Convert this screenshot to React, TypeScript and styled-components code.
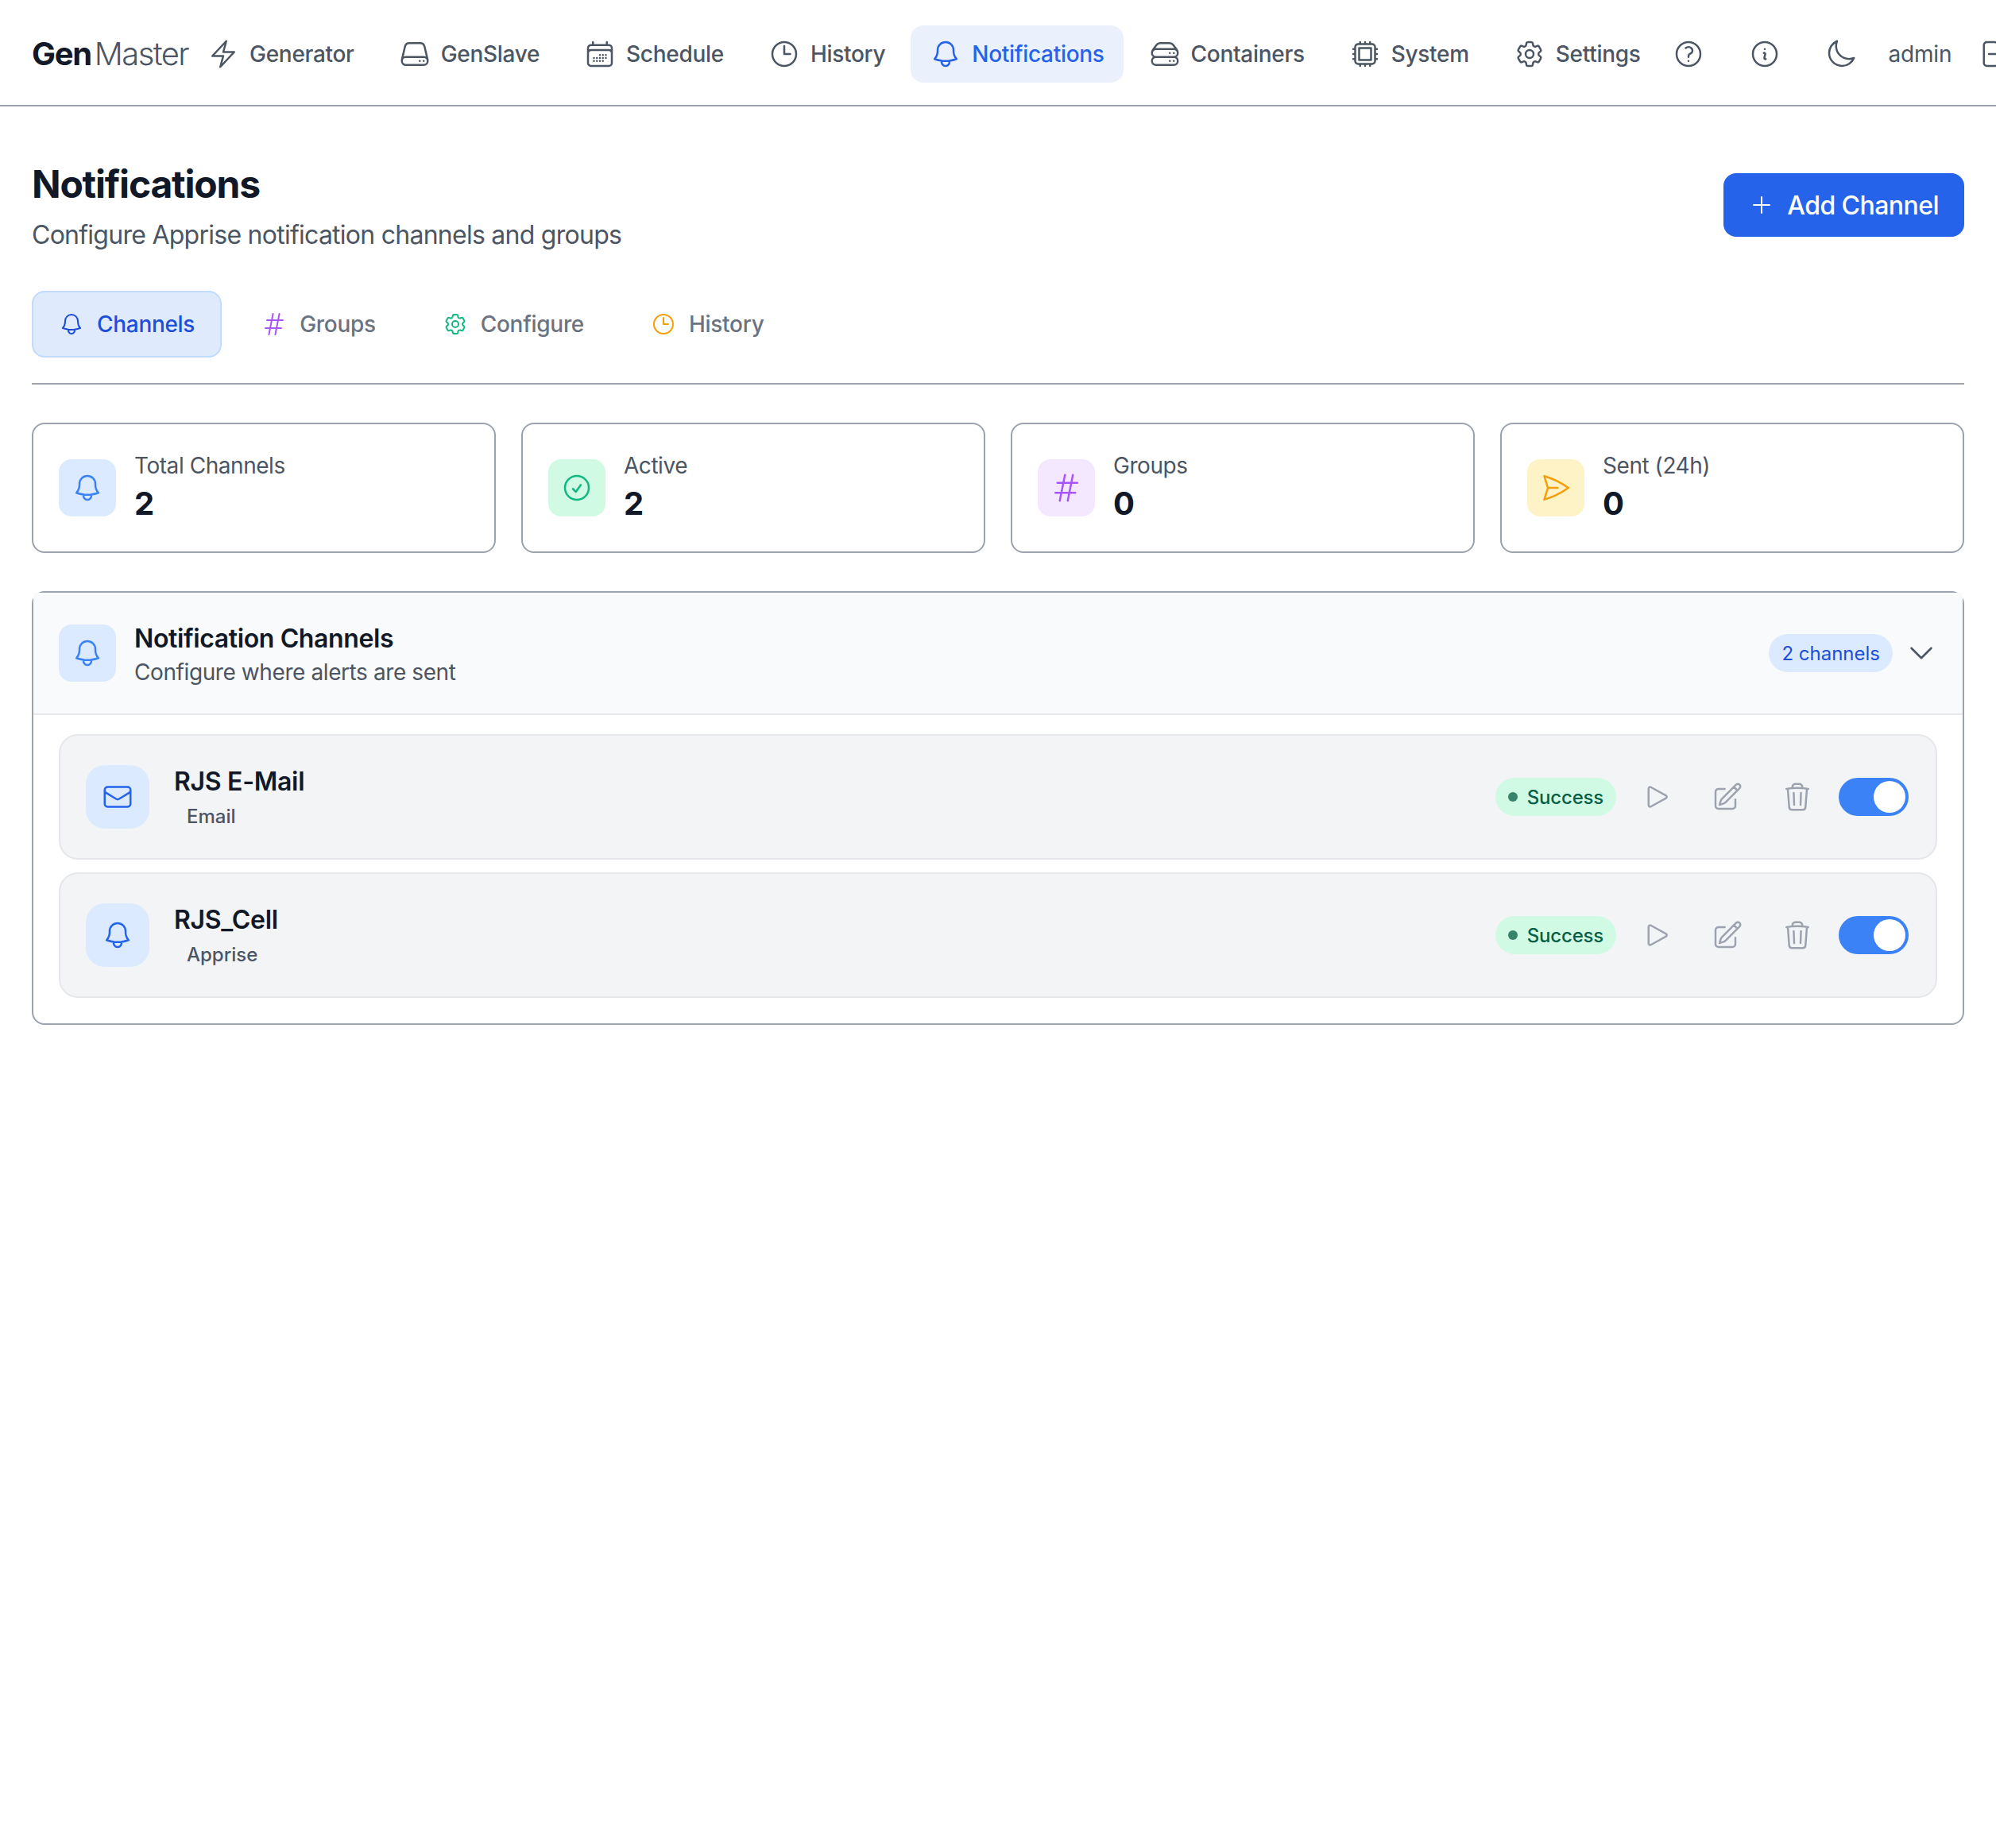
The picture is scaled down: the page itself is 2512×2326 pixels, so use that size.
import styled, { createGlobalStyle } from "styled-components";
import {
  HiOutlineArrowRightOnRectangle,
  HiOutlineBell,
  HiOutlineBolt,
  HiOutlineCalendarDays,
  HiOutlineCheckCircle,
  HiOutlineChevronDown,
  HiOutlineClock,
  HiOutlineCog6Tooth,
  HiOutlineCpuChip,
  HiOutlineEnvelope,
  HiOutlineHashtag,
  HiOutlineInformationCircle,
  HiOutlineMoon,
  HiOutlinePaperAirplane,
  HiOutlinePencilSquare,
  HiOutlinePlay,
  HiOutlinePlus,
  HiOutlineQuestionMarkCircle,
  HiOutlineServer,
  HiOutlineServerStack,
  HiOutlineTrash,
} from "react-icons/hi2";

const NavItems = [
  { title: "Generator", icon: HiOutlineBolt },
  { title: "GenSlave", icon: HiOutlineServer },
  { title: "Schedule", icon: HiOutlineCalendarDays },
  { title: "History", icon: HiOutlineClock },
  { title: "Notifications", icon: HiOutlineBell, active: true },
  { title: "Containers", icon: HiOutlineServerStack },
  { title: "System", icon: HiOutlineCpuChip },
  { title: "Settings", icon: HiOutlineCog6Tooth },
];

const TabItems = [
  { title: "Channels", icon: HiOutlineBell, color: "#1d4ed8", active: true },
  { title: "Groups", icon: HiOutlineHashtag, color: "#a855f7" },
  { title: "Configure", icon: HiOutlineCog6Tooth, color: "#10b981" },
  { title: "History", icon: HiOutlineClock, color: "#f59e0b" },
];

const Stats = [
  { label: "Total Channels", value: "2", icon: HiOutlineBell, color: "#3b82f6", bg: "#dbeafe" },
  { label: "Active", value: "2", icon: HiOutlineCheckCircle, color: "#10b981", bg: "#d1fae5" },
  { label: "Groups", value: "0", icon: HiOutlineHashtag, color: "#a855f7", bg: "#f3e8ff" },
  { label: "Sent (24h)", value: "0", icon: HiOutlinePaperAirplane, color: "#f59e0b", bg: "#fef3c7" },
];

const Channels = [
  { name: "RJS E-Mail", type: "Email", icon: HiOutlineEnvelope },
  { name: "RJS_Cell", type: "Apprise", icon: HiOutlineBell },
];

export default function App() {
  return (
    <>
      <GlobalStyle />
      <Nav>
        <Logo>
          <strong>Gen</strong>
          <span>Master</span>
        </Logo>
        <NavLinks>
          {NavItems.map((item) => (
            <NavItem key={item.title} $active={item.active}>
              <item.icon />
              {item.title}
            </NavItem>
          ))}
        </NavLinks>
        <NavTools>
          <NavIconButton>
            <HiOutlineQuestionMarkCircle />
          </NavIconButton>
          <NavIconButton>
            <HiOutlineInformationCircle />
          </NavIconButton>
          <NavIconButton>
            <HiOutlineMoon />
          </NavIconButton>
          <UserName>admin</UserName>
          <NavIconButton>
            <HiOutlineArrowRightOnRectangle />
          </NavIconButton>
        </NavTools>
      </Nav>

      <Main>
        <PageHeader>
          <PageHeading>
            <PageTitle>Notifications</PageTitle>
            <PageSubtitle>Configure Apprise notification channels and groups</PageSubtitle>
          </PageHeading>
          <AddButton>
            <HiOutlinePlus />
            Add Channel
          </AddButton>
        </PageHeader>

        <Tabs>
          {TabItems.map((tab) => (
            <Tab key={tab.title} $active={tab.active} $iconColor={tab.color}>
              <tab.icon />
              {tab.title}
            </Tab>
          ))}
        </Tabs>

        <StatGrid>
          {Stats.map((stat) => (
            <StatCard key={stat.label}>
              <IconBox $bg={stat.bg} $color={stat.color}>
                <stat.icon />
              </IconBox>
              <div>
                <StatLabel>{stat.label}</StatLabel>
                <StatValue>{stat.value}</StatValue>
              </div>
            </StatCard>
          ))}
        </StatGrid>

        <Section>
          <SectionHeader>
            <IconBox $bg="#dbeafe" $color="#3b82f6">
              <HiOutlineBell />
            </IconBox>
            <SectionText>
              <SectionTitle>Notification Channels</SectionTitle>
              <SectionSubtitle>Configure where alerts are sent</SectionSubtitle>
            </SectionText>
            <CountBadge>2 channels</CountBadge>
            <Chevron>
              <HiOutlineChevronDown />
            </Chevron>
          </SectionHeader>
          <SectionBody>
            {Channels.map((channel) => (
              <ChannelRow key={channel.name}>
                <ChannelIcon>
                  <channel.icon />
                </ChannelIcon>
                <ChannelInfo>
                  <ChannelName>{channel.name}</ChannelName>
                  <ChannelType>{channel.type}</ChannelType>
                </ChannelInfo>
                <StatusBadge>
                  <StatusDot />
                  Success
                </StatusBadge>
                <RowButton>
                  <HiOutlinePlay />
                </RowButton>
                <RowButton>
                  <HiOutlinePencilSquare />
                </RowButton>
                <RowButton>
                  <HiOutlineTrash />
                </RowButton>
                <Toggle>
                  <ToggleKnob />
                </Toggle>
              </ChannelRow>
            ))}
          </SectionBody>
        </Section>
      </Main>
    </>
  );
}

const GlobalStyle = createGlobalStyle`
  html, body {
    margin: 0;
    background: #fff;
    overflow-x: hidden;
  }
  body {
    min-height: 2326px;
    font-family: Inter, "Liberation Sans", sans-serif;
    color: #111827;
  }
  * {
    box-sizing: border-box;
  }
`;

const Nav = styled.nav`
  height: 134px;
  padding: 32px 0 28px 40px;
  display: flex;
  align-items: center;
  border-bottom: 2px solid #9ca3af;
  overflow: hidden;
`;

const Logo = styled.div`
  flex: none;
  font-size: 40px;
  line-height: 56px;
  color: #4b5563;
  strong {
    font-weight: 700;
    color: #111827;
    margin-right: 4px;
    letter-spacing: -1.3px;
  }
  span {
    font-weight: 300;
    letter-spacing: -1.6px;
  }
`;

const NavLinks = styled.div`
  flex: none;
  display: flex;
  gap: 8px;
`;

const NavItem = styled.a<{ $active?: boolean }>`
  display: flex;
  align-items: center;
  gap: 13px;
  height: 72px;
  padding: 0 24px;
  border-radius: 16px;
  font-size: 28px;
  font-weight: 500;
  letter-spacing: -0.3px;
  white-space: nowrap;
  color: ${(p) => (p.$active ? "#2563eb" : "#4b5563")};
  background: ${(p) => (p.$active ? "#eaf1fd" : "transparent")};
  svg {
    width: 40px;
    height: 40px;
    flex: none;
  }
`;

const NavTools = styled.div`
  flex: none;
  display: flex;
  align-items: center;
  gap: 24px;
`;

const NavIconButton = styled.button`
  flex: none;
  padding: 16px;
  border: 0;
  background: none;
  color: #4b5563;
  display: flex;
  svg {
    width: 40px;
    height: 40px;
  }
`;

const UserName = styled.span`
  margin-right: -8px;
  font-size: 28px;
  letter-spacing: -0.2px;
  color: #4b5563;
`;

const Main = styled.main`
  padding: 64px 40px 0;
`;

const PageHeader = styled.header`
  display: flex;
  justify-content: space-between;
  align-items: flex-start;
  margin-bottom: 46px;
`;

const PageHeading = styled.div`
  padding-top: 2px;
`;

const PageTitle = styled.h1`
  margin: 0 0 8px;
  font-size: 48px;
  line-height: 64px;
  font-weight: 700;
  letter-spacing: -1.2px;
  color: #111827;
`;

const PageSubtitle = styled.p`
  margin: 0;
  font-size: 32px;
  line-height: 48px;
  letter-spacing: -0.74px;
  color: #4b5563;
`;

const AddButton = styled.button`
  display: flex;
  align-items: center;
  gap: 16px;
  height: 80px;
  margin-top: 20px;
  padding: 0 32px;
  border: 0;
  border-radius: 16px;
  background: #2563eb;
  color: #fff;
  font-family: inherit;
  font-size: 32px;
  font-weight: 500;
  letter-spacing: -0.55px;
  svg {
    width: 32px;
    height: 32px;
  }
`;

const Tabs = styled.div`
  display: flex;
  gap: 16px;
  padding-bottom: 32px;
  border-bottom: 2px solid #9ca3af;
  margin-bottom: 48px;
`;

const Tab = styled.button<{ $active?: boolean; $iconColor: string }>`
  display: flex;
  align-items: center;
  gap: 16px;
  height: 84px;
  padding: 0 32px;
  border: 2px solid ${(p) => (p.$active ? "#bfdbfe" : "transparent")};
  border-radius: 16px;
  background: ${(p) => (p.$active ? "#e0eafd" : "transparent")};
  color: ${(p) => (p.$active ? "#1d4ed8" : "#6b7280")};
  font-family: inherit;
  font-size: 28px;
  font-weight: 500;
  letter-spacing: -0.3px;
  svg {
    width: 32px;
    height: 32px;
    color: ${(p) => p.$iconColor};
  }
`;

const StatGrid = styled.div`
  display: grid;
  grid-template-columns: repeat(4, 1fr);
  gap: 32px;
  margin-bottom: 48px;
`;

const StatCard = styled.div`
  display: flex;
  align-items: center;
  gap: 23px;
  padding: 32px;
  border: 2px solid #9ca3af;
  border-radius: 16px;
`;

const IconBox = styled.div<{ $bg: string; $color: string }>`
  flex: none;
  width: 72px;
  height: 72px;
  display: flex;
  align-items: center;
  justify-content: center;
  border-radius: 16px;
  background: ${(p) => p.$bg};
  color: ${(p) => p.$color};
  svg {
    width: 40px;
    height: 40px;
  }
`;

const StatLabel = styled.div`
  font-size: 28px;
  line-height: 40px;
  letter-spacing: -0.45px;
  color: #4b5563;
`;

const StatValue = styled.div`
  font-size: 40px;
  line-height: 56px;
  font-weight: 700;
  color: #111827;
`;

const Section = styled.section`
  border: 2px solid #9ca3af;
  border-radius: 16px;
`;

const SectionHeader = styled.div`
  display: flex;
  align-items: center;
  gap: 24px;
  padding: 32px;
  background: #f9fafb;
  border-bottom: 2px solid #e5e7eb;
`;

const SectionText = styled.div`
  flex: 1;
  margin-left: -1px;
`;

const SectionTitle = styled.div`
  padding-top: 2px;
  font-size: 32px;
  line-height: 48px;
  font-weight: 600;
  letter-spacing: -0.38px;
  color: #111827;
`;

const SectionSubtitle = styled.div`
  margin-top: -2px;
  font-size: 28px;
  line-height: 40px;
  letter-spacing: -0.41px;
  color: #4b5563;
`;

const CountBadge = styled.span`
  height: 48px;
  padding: 0 16px;
  display: flex;
  align-items: center;
  border-radius: 24px;
  background: #dbeafe;
  color: #1d4ed8;
  font-size: 24px;
  font-weight: 400;
`;

const Chevron = styled.span`
  display: flex;
  margin-left: -8px;
  color: #4b5563;
  svg {
    width: 40px;
    height: 40px;
  }
`;

const SectionBody = styled.div`
  display: flex;
  flex-direction: column;
  gap: 16px;
  padding: 24px 32px 32px;
`;

const ChannelRow = styled.div`
  display: flex;
  align-items: center;
  gap: 16px;
  padding: 32px 34px 32px 32px;
  background: #f3f4f6;
  border: 2px solid #e5e7eb;
  border-radius: 24px;
`;

const ChannelIcon = styled.div`
  flex: none;
  width: 80px;
  height: 80px;
  margin-right: 15px;
  display: flex;
  align-items: center;
  justify-content: center;
  border-radius: 24px;
  background: #dbeafe;
  color: #2563eb;
  svg {
    width: 40px;
    height: 40px;
  }
`;

const ChannelInfo = styled.div`
  flex: 1;
`;

const ChannelName = styled.div`
  padding-top: 2px;
  font-size: 32px;
  line-height: 48px;
  font-weight: 600;
  letter-spacing: -0.3px;
  color: #111827;
`;

const ChannelType = styled.div`
  padding-left: 16px;
  font-size: 24px;
  line-height: 40px;
  font-weight: 500;
  color: #4b5563;
`;

const StatusBadge = styled.span`
  height: 48px;
  padding: 0 16px;
  display: flex;
  align-items: center;
  gap: 12px;
  border-radius: 24px;
  background: #d1fae5;
  color: #065f46;
  font-size: 24px;
  font-weight: 500;
  letter-spacing: -0.2px;
`;

const StatusDot = styled.span`
  width: 12px;
  height: 12px;
  border-radius: 50%;
  background: #38846a;
`;

const RowButton = styled.button`
  flex: none;
  padding: 16px;
  border: 0;
  background: none;
  color: #9ca3af;
  display: flex;
  svg {
    width: 40px;
    height: 40px;
  }
`;

const Toggle = styled.span`
  flex: none;
  width: 88px;
  height: 48px;
  padding: 4px;
  display: flex;
  justify-content: flex-end;
  border-radius: 24px;
  background: #3b82f6;
`;

const ToggleKnob = styled.span`
  width: 40px;
  height: 40px;
  border-radius: 50%;
  background: #fff;
`;
